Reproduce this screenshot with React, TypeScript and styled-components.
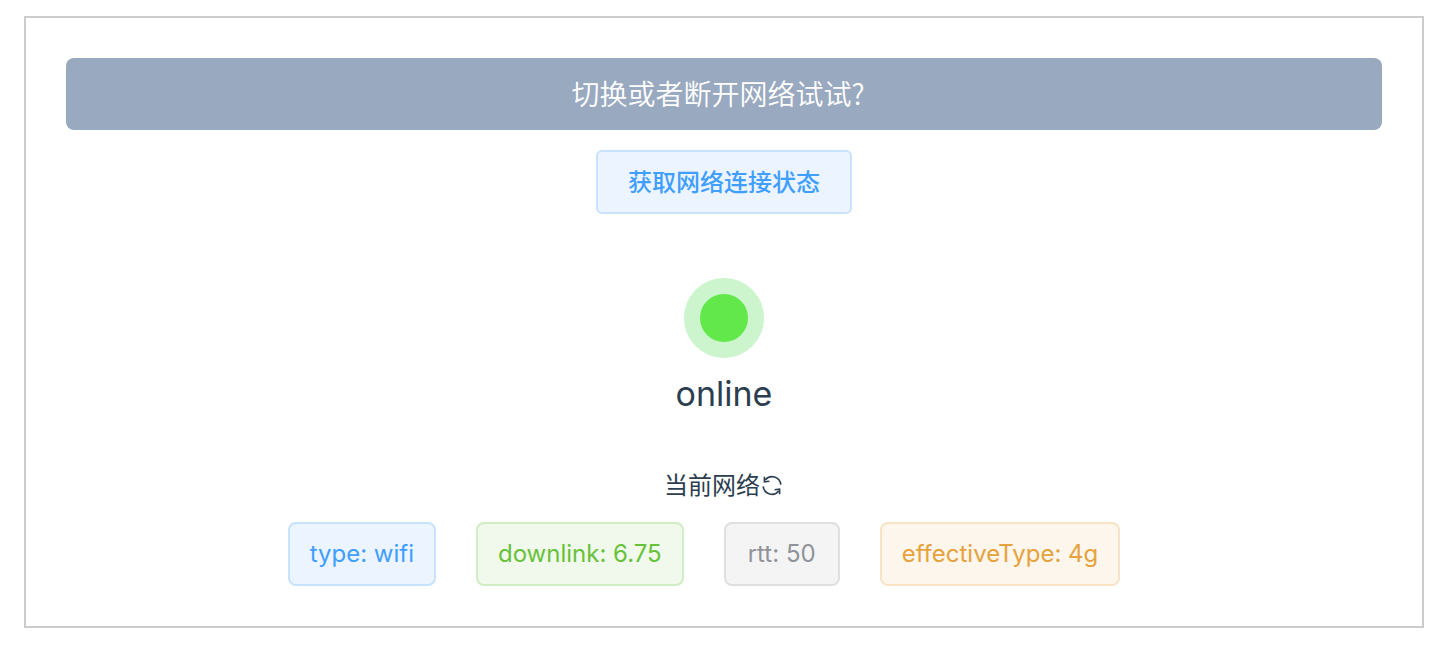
import React, { useState } from 'react';
import styled, { createGlobalStyle } from 'styled-components';

const GlobalStyle = createGlobalStyle`
  *, *::before, *::after { box-sizing: border-box; }
  body {
    margin: 0;
    background: #fff;
    color: #2c3e50;
    font-family: Inter, "Noto Sans CJK SC", sans-serif;
    font-size: 24px;
    line-height: 32px;
  }
`;

const Panel = styled.main`
  display: flex;
  flex-direction: column;
  align-items: center;
  margin: 16px 26px 20px 24px;
  padding: 40px;
  border: 2px solid #ccc;
`;

const Alert = styled.div`
  align-self: stretch;
  padding: 15px 28px 17px 16px;
  border-radius: 8px;
  background: #99a9bf;
  color: #fff;
  font-family: "Noto Sans CJK SC", sans-serif;
  font-size: 28px;
  font-weight: 350;
  line-height: 40px;
  text-align: center;
`;

const FetchButton = styled.button`
  margin-top: 20px;
  padding: 13px 30px 15px;
  border: 2px solid #c6e2ff;
  border-radius: 6px;
  background: #ecf5ff;
  color: #409eff;
  font-family: "Noto Sans CJK SC", sans-serif;
  font-size: 24px;
  font-weight: 500;
  line-height: 32px;
  cursor: pointer;
`;

const StatusDot = styled.div<{ $online: boolean }>`
  width: 80px;
  height: 80px;
  margin-top: 64px;
  border: 16px solid ${p => (p.$online ? '#ccf4cd' : '#fbd0d0')};
  border-radius: 50%;
  background: ${p => (p.$online ? '#62e84a' : '#f56c6c')};
`;

const StatusText = styled.div`
  margin-top: 12px;
  font-size: 34px;
  line-height: 48px;
`;

const NetworkTitle = styled.div`
  display: flex;
  align-items: center;
  margin-top: 52px;
`;

const RefreshButton = styled.button`
  display: flex;
  padding: 0;
  border: 0;
  background: none;
  color: inherit;
  cursor: pointer;
`;

const TagList = styled.ul`
  display: flex;
  flex-wrap: wrap;
  justify-content: center;
  margin: 20px 0 0;
  padding: 0;
  list-style: none;
`;

const tones = {
  primary: { text: '#409eff', fill: '#ecf5ff', line: '#c6e2ff' },
  success: { text: '#67c23a', fill: '#f0f9eb', line: '#d1edc4' },
  info: { text: '#909399', fill: '#f4f4f5', line: '#dedfe0' },
  warning: { text: '#e6a23c', fill: '#fdf6ec', line: '#f8e3c5' },
};

type Tone = keyof typeof tones;

const Tag = styled.li<{ $tone: Tone }>`
  min-width: 116px;
  margin-right: 40px;
  padding: 14px 20px;
  border: 2px solid ${p => tones[p.$tone].line};
  border-radius: 8px;
  background: ${p => tones[p.$tone].fill};
  color: ${p => tones[p.$tone].text};
  text-align: center;
  white-space: nowrap;
`;

const tags: { name: string; value: string; tone: Tone }[] = [
  { name: 'type', value: 'wifi', tone: 'primary' },
  { name: 'downlink', value: '6.75', tone: 'success' },
  { name: 'rtt', value: '50', tone: 'info' },
  { name: 'effectiveType', value: '4g', tone: 'warning' },
];

function RefreshIcon() {
  return (
    <svg width="24" height="24" viewBox="0 0 24 24" fill="none" stroke="currentColor" strokeWidth="1.6" aria-hidden="true">
      <path d="M3.2 12.4A8.8 8.8 0 0 0 18.8 17M20.8 10.6A8.8 8.8 0 0 0 5.2 6" />
      <path d="M4.4 2.8v5l5-.6M19.6 20.2v-5l-5 .6" />
    </svg>
  );
}

export default function App() {
  const [online, setOnline] = useState(true);
  const refresh = () => setOnline(navigator.onLine);

  return (
    <>
      <GlobalStyle />
      <Panel>
        <Alert role="alert">切换或者断开网络试试?</Alert>
        <FetchButton type="button" onClick={refresh}>获取网络连接状态</FetchButton>
        <StatusDot $online={online} />
        <StatusText>{online ? 'online' : 'offline'}</StatusText>
        <NetworkTitle>
          当前网络
          <RefreshButton type="button" aria-label="刷新" onClick={refresh}>
            <RefreshIcon />
          </RefreshButton>
        </NetworkTitle>
        <TagList>
          {tags.map(tag => (
            <Tag key={tag.name} $tone={tag.tone}>{`${tag.name}: ${tag.value}`}</Tag>
          ))}
        </TagList>
      </Panel>
    </>
  );
}
